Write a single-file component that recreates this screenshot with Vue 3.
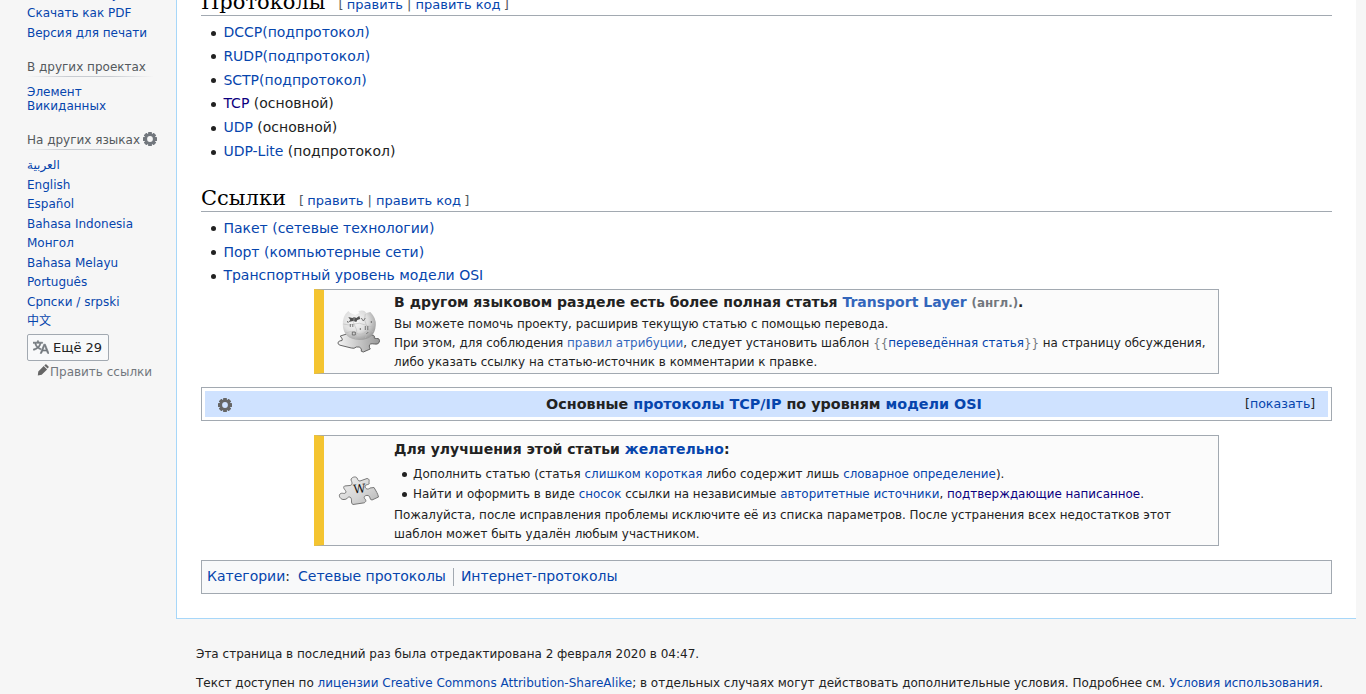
<script setup>
const languages = [
  'العربية', 'English', 'Español', 'Bahasa Indonesia', 'Монгол',
  'Bahasa Melayu', 'Português', 'Српски / srpski', '中文',
]
const protocols = [
  { name: 'DCCP(подпротокол)', note: '' },
  { name: 'RUDP(подпротокол)', note: '' },
  { name: 'SCTP(подпротокол)', note: '' },
  { name: 'TCP', note: ' (основной)', visited: true },
  { name: 'UDP', note: ' (основной)' },
  { name: 'UDP-Lite', note: ' (подпротокол)' },
]
const links = ['Пакет (сетевые технологии)', 'Порт (компьютерные сети)', 'Транспортный уровень модели OSI']
const gearAngles = [0, 45, 90, 135]
</script>

<template>
  <div class="page">
    <nav class="sidebar">
      <ul class="tools">
        <li><a>Создать книгу</a></li>
        <li><a>Скачать как PDF</a></li>
        <li><a>Версия для печати</a></li>
      </ul>
      <h3 class="projects-title">В других проектах</h3>
      <ul>
        <li class="narrow"><a>Элемент Викиданных</a></li>
      </ul>
      <div class="lang-head">
        <h3>На других языках</h3>
        <svg class="gear side" viewBox="-7 -7 14 14">
          <rect v-for="a in gearAngles" :key="a" x="-1.9" y="-7" width="3.8" height="14" rx=".5" :transform="`rotate(${a})`" />
          <circle r="5.6" /><circle class="hole" r="2.9" />
        </svg>
      </div>
      <ul>
        <li v-for="l in languages" :key="l"><a>{{ l }}</a></li>
      </ul>
      <button class="more">
        <svg viewBox="0 0 20 20" width="16" height="16">
          <path d="M20 18h-1.44a.61.61 0 0 1-.4-.12.81.81 0 0 1-.23-.31L17 15h-5l-1 2.54a.77.77 0 0 1-.22.3.59.59 0 0 1-.4.14H9l4.55-11.47h1.89zm-3.53-4.31L14.89 9.5a11.62 11.62 0 0 1-.39-1.24q-.09.37-.19.69l-.19.56-1.58 4.19zm-6.3-1.58a13.43 13.43 0 0 1-2.91-1.41 11.46 11.46 0 0 0 2.81-5.37H12V4H7.31a4 4 0 0 0-.2-.56C6.87 2.79 6.6 2 6.6 2l-1.47.5s.4.89.6 1.5H0v1.33h2.15A11.23 11.23 0 0 0 5 10.7a17.19 17.19 0 0 1-5 2.1q.56.82.87 1.38a23.28 23.28 0 0 0 5.22-2.51 15.64 15.64 0 0 0 3.56 1.77zM3.63 5.33h4.91a8.11 8.11 0 0 1-2.45 4.45 9.11 9.11 0 0 1-2.46-4.45z" />
        </svg>
        <span>Ещё 29</span>
      </button>
      <div class="edit-links">
        <svg viewBox="0 0 12 12" width="12" height="12"><path d="M.8 11.400l.5-4 5.400-5.400 3.400 3.400-5.400 5.400zM7.300 1.400l1-1q.6-.5 1.200 0l2 2q.5.6 0 1.200l-.9.9z" /></svg>
        <span>Править ссылки</span>
      </div>
    </nav>

    <div class="main">
      <main class="content">
        <h2>Протоколы<span class="edit"><i>[</i><a>править</a><b> | </b><a>править код</a><i class="end">]</i></span></h2>
        <ul class="list">
          <li v-for="p in protocols" :key="p.name"><a :class="{ visited: p.visited }">{{ p.name }}</a>{{ p.note }}</li>
        </ul>
        <h2>Ссылки<span class="edit"><i>[</i><a>править</a><b> | </b><a>править код</a><i class="end">]</i></span></h2>
        <ul class="list">
          <li v-for="l in links" :key="l"><a>{{ l }}</a></li>
        </ul>

        <section class="ambox translate">
          <div class="pic">
            <svg width="44" height="44" viewBox="0.7 0 44 44">
              <defs>
                <radialGradient id="globe" cx=".38" cy=".35" r=".7"><stop offset="0" stop-color="#fafafa" /><stop offset=".55" stop-color="#dedede" /><stop offset="1" stop-color="#9a9a9a" /></radialGradient>
                <linearGradient id="base" x1="0" x2="1"><stop offset="0" stop-color="#f5f5f5" /><stop offset="1" stop-color="#999" /></linearGradient>
                <linearGradient id="piece" x1="0" x2="1" y1="0" y2="1"><stop offset="0" stop-color="#f2f2f2" /><stop offset=".6" stop-color="#d4d4d4" /><stop offset="1" stop-color="#b4b4b4" /></linearGradient>
              </defs>
              <path d="M4 27Q9 25 13 25L34 26Q38 26 38 27Q37 30 40 29.500Q44 29 43 33Q42 36 38 35Q33 34 33 37Q33 39 34 40L27 43Q24 43 25 40Q24 37 20 38Q18 40 15 39L3 36Q0 34 3 32Q7 32 6 30Z" fill="url(#base)" stroke="#555" stroke-width=".9" />
              <path d="M12 2L14 4L19 6L23 4L22 2Q26 1 28 2L30 4L34 3Q40 9 39.500 16Q38.500 31 23 31Q7 30 6.500 16Q6 7 12 2Z" fill="url(#globe)" />
              <path d="M12 8l4 1 2-1 2 1 3-2 1 3-3 1-1 2-3-1-5 1 2-2z" fill="#505050" />
              <path d="M7 15q6 2 11 0t11 1 9 0M9 24q6-3 11 0t9-1 8 0M18 8q-2 6 1 10t0 13M29 5q-2 6 1 11t-1 13" fill="none" stroke="#bbb" stroke-width=".6" />
              <path d="M14 15v3m2.500-3v3M25 9l2 3 2-3M29 17v4m2.500-4v4M16 23v3h3v-3zM30 25l2-2M11 12l1 2M35 12v2M24 19v2" fill="none" stroke="#666" stroke-width=".9" />
            </svg>
          </div>
          <div class="text">
            <div class="title">В другом языковом разделе есть более полная статья <a class="ext">Transport Layer</a> <span class="lang">(англ.)</span>.</div>
            <div class="small">Вы можете помочь проекту, расширив текущую статью с помощью перевода.<br>При этом, для соблюдения <a class="ext">правил атрибуции</a>, следует установить шаблон <span class="code"><span v-pre>{{</span><a>переведённая статья</a><span v-pre>}}</span></span> на страницу обсуждения, либо указать ссылку на статью-источник в комментарии к правке.</div>
          </div>
        </section>

        <section class="navbox">
          <div class="navbar">
            <svg class="gear" viewBox="-7 -7 14 14">
              <rect v-for="a in gearAngles" :key="a" x="-1.9" y="-7" width="3.8" height="14" rx=".5" :transform="`rotate(${a})`" />
              <circle r="5.6" /><circle class="hole" r="2.9" />
            </svg>
            <strong>Основные <a>протоколы TCP/IP</a> по уровням <a>модели OSI</a></strong>
            <span class="show">[<a>показать</a>]</span>
          </div>
        </section>

        <section class="ambox improve">
          <div class="pic">
            <svg width="42" height="32" viewBox="0 -1 42 32">
              <path d="M6.500 11L12 10.500C15 10 14 7 13 5C13 2 18 1 19 3C20 5 20 6 22 6L29 3.500C32 4 31 6 31 8C32 10 28 9 27 11C27 14 30 15 32 13L36 12.500C38 16 40 19 40.500 22L34 25C31 25 33 21 30 20.500C27 20 25 22 27 24C29 26 27 28 25 28L15 29.500C12 28 15 24 12 22C10 21 9 25 6 24.500C3 25 0 21 2 19C4 17 7 20 8 17C8 15 4 13 6.500 11Z" fill="url(#piece)" stroke="#777" stroke-width="1" />
              <text x="21.500" y="18" text-anchor="middle" transform="rotate(-6 21 14)">W</text>
            </svg>
          </div>
          <div class="text">
            <div class="title">Для улучшения этой статьи <a>желательно</a>:</div>
            <div class="small">
              <ul>
                <li>Дополнить статью (статья <a>слишком короткая</a> либо содержит лишь <a>словарное определение</a>).</li>
                <li>Найти и оформить в виде <a>сносок</a> ссылки на независимые <a>авторитетные источники</a>, <a class="visited">подтверждающие написанное</a>.</li>
              </ul>
              Пожалуйста, после исправления проблемы исключите её из списка параметров. После устранения всех недостатков этот шаблон может быть удалён любым участником.
            </div>
          </div>
        </section>

        <div class="cats"><span><a>Категории</a>:</span><a class="first">Сетевые протоколы</a><a class="next">Интернет-протоколы</a></div>
      </main>
      <footer>
        <p>Эта страница в последний раз была отредактирована 2 февраля 2020 в 04:47.</p>
        <p>Текст доступен по <a>лицензии Creative Commons Attribution-ShareAlike</a>; в отдельных случаях могут действовать дополнительные условия. Подробнее см. <a>Условия использования</a>.</p>
      </footer>
    </div>
  </div>
</template>

<style>
body { background: #f6f6f6; overflow: hidden; }
</style>

<style scoped>
.page { display: flex; height: 694px; overflow: hidden; background: #f6f6f6; color: #222; font: 14px/22.4px "DejaVu Sans", "Noto Sans CJK SC", sans-serif; }
a { color: #0645ad; }
a.visited { color: #0b0080; }
a.ext { color: #36b; }
ul { list-style: none; margin: 0; padding: 0; }
.sidebar { width: 176px; flex: none; box-sizing: border-box; padding-left: 27px; font-size: 12px; line-height: 13.5px; }
.sidebar li { padding: 3px 0; }
.sidebar .tools { margin-top: -15.500px; }
.sidebar .narrow { width: 110px; line-height: 14px; }
h3 { margin: 0; font-size: 12px; font-weight: 400; line-height: 19.200px; color: #54595d; white-space: nowrap; }
.projects-title { width: 126px; height: 18px; margin: 15px 0 4.500px; }
.projects-title, .lang-head { border-bottom: 1px solid; border-image: linear-gradient(to right, #f6f6f600, #c8ccd1 33%, #c8ccd1 66%, #f6f6f600) 1; }
.lang-head { display: flex; width: 116px; height: 18px; margin: 15px 0 6.700px; }
.gear { width: 14px; height: 14px; flex: none; fill: #666; }
.gear.side { margin: 1px 0 0 3px; fill: #72777d; }
.hole { fill: #cfe2ff; }
.side .hole { fill: #f6f6f6; }
.more { display: flex; align-items: center; width: 82px; height: 27px; margin: 2px 0 0; padding: 0 4.500px; gap: 4.500px; border: 1px solid #a2a9b1; border-radius: 2px; background: #f8f9fa; color: #222; font: 13px/20px "DejaVu Sans", sans-serif; white-space: nowrap; }
.more span { padding-top: 1px; }
.more svg { flex: none; fill: #72777d; stroke: #72777d; stroke-width: .8; }
.edit-links { display: flex; margin: 4px 0 0 10px; color: #72777d; line-height: 15px; }
.edit-links svg { fill: #666; margin-top: -1px; }
.edit-links span { margin-left: 1px; }
.main { width: 1180px; flex: none; }
.content { box-sizing: border-box; height: 619px; padding: 0 24px; overflow: hidden; background: #fff; border: solid #a7d7f9; border-width: 0 0 1px 1px; }
h2 { margin: 21px 0 5.050px; height: 27.400px; border-bottom: 1px solid #a2a9b1; color: #000; font: 400 21px/30.600px "DejaVu Serif", serif; }
h2:first-child { margin-top: -12.400px; line-height: 29px; }
.edit { margin-left: 13px; color: #54595d; font: 13px/13px "DejaVu Sans", sans-serif; }
.edit i, .edit b { font-style: normal; font-weight: 400; }
.edit i { margin-right: 3.250px; }
.edit i.end { margin: 0 0 0 3.250px; }
.list { padding-left: 22.400px; }
.list li, .small li { position: relative; }
.list li + li { margin-top: 1.400px; }
.list li::before, .small li::before { content: ""; position: absolute; left: -12px; top: 9.500px; width: 5px; height: 5px; border-radius: 50%; background: #222; }
.ambox { display: flex; box-sizing: border-box; width: 80%; margin: 0 auto; border: 1px solid #a2a9b1; border-left: 10px solid #f4c430; background: #fbfbfb; }
.translate { height: 85px; margin-top: 2px; }
.improve { height: 111px; margin-top: 14px; }
.pic { width: 70px; flex: none; display: flex; align-items: center; justify-content: center; }
.pic text { font: 12px "DejaVu Serif", serif; fill: #111; }
.title { font-weight: 700; }
.text { padding-top: 1px; width: 820px; }
.translate .small { padding-top: .400px; }
.improve .text { padding-top: 2px; }
.lang { color: #72777d; font-size: 11.900px; }
.small { font-size: 11.914px; line-height: 19.040px; }
.code { color: #72777d; }
.small ul { padding: 5px 0 1.200px 19px; }
.small li { margin-bottom: .700px; }
.small li::before { left: -11.500px; top: 7px; }
.navbox { height: 34px; box-sizing: border-box; margin-top: 13px; padding: 3px; border: 1px solid #a2a9b1; }
.navbar { display: flex; align-items: center; height: 26px; padding: 0 13px; background: #cfe2ff; }
.navbar .gear { margin-top: 2px; }
.navbar strong { flex: 1; text-align: center; margin-left: 51px; font-size: 14.350px; white-space: nowrap; }
.show { width: 70px; flex: none; text-align: right; font-size: 12.600px; }
.cats { display: flex; box-sizing: border-box; height: 34px; margin-top: 14px; padding: 4px 5px; border: 1px solid #a2a9b1; background: #f8f9fa; }
.first { margin-left: 8px; }
.next { height: 18px; margin: 3px 0 0 7px; padding-left: 7px; border-left: 1px solid #a2a9b1; line-height: 16.400px; }
footer { padding: 25px 0 0 20px; font-size: 12px; line-height: 20px; white-space: nowrap; }
footer p { margin: 0 0 9px; }
</style>
